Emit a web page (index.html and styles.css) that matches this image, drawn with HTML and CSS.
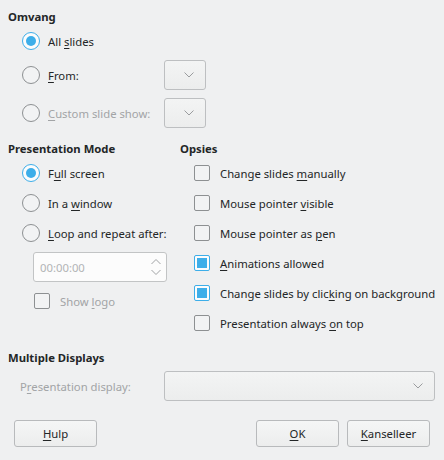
FILE: index.html
```html
<!DOCTYPE html>
<html>
<head>
<meta charset="utf-8">
<link rel="stylesheet" href="styles.css">
</head>
<body>
<div class="dlg">
  <section class="omvang">
    <div class="hdr">Omvang</div>
    <div class="row r-first"><span class="radio on"></span><span class="lbl">All <u>s</u>lides</span></div>
    <div class="row r-combo"><span class="radio"></span><span class="lbl wide"><u>F</u>rom:</span><span class="combo small"><svg class="chev" viewBox="0 0 10 6"><path d="M0.5 0.5 L5 5 L9.5 0.5"/></svg></span></div>
    <div class="row r-combo r-last"><span class="radio"></span><span class="lbl wide dis"><u>C</u>ustom slide show:</span><span class="combo small"><svg class="chev" viewBox="0 0 10 6"><path d="M0.5 0.5 L5 5 L9.5 0.5"/></svg></span></div>
  </section>
  <section class="mid">
    <div class="col left">
      <div class="hdr">Presentation Mode</div>
      <div class="row r30"><span class="radio on"></span><span class="lbl">F<u>u</u>ll screen</span></div>
      <div class="row r30"><span class="radio"></span><span class="lbl">In a <u>w</u>indow</span></div>
      <div class="row r30"><span class="radio"></span><span class="lbl"><u>L</u>oop and repeat after:</span></div>
      <div class="spin"><span class="spintext">00:00:00</span><svg class="updown" viewBox="0 0 10 16"><path d="M0.5 5 L5 0.5 L9.5 5 M0.5 11 L5 15.5 L9.5 11"/></svg></div>
      <div class="row r30 logo"><span class="check"></span><span class="lbl dis">Show <u>l</u>ogo</span></div>
    </div>
    <div class="col right">
      <div class="hdr">Opsies</div>
      <div class="row r30"><span class="check"></span><span class="lbl">Change slides <u>m</u>anually</span></div>
      <div class="row r30"><span class="check"></span><span class="lbl">Mouse pointer <u>v</u>isible</span></div>
      <div class="row r30"><span class="check"></span><span class="lbl">Mouse pointer as <u>p</u>en</span></div>
      <div class="row r30"><span class="check on"></span><span class="lbl"><u>A</u>nimations allowed</span></div>
      <div class="row r30"><span class="check on"></span><span class="lbl">Change slides by clic<u>k</u>ing on background</span></div>
      <div class="row r30"><span class="check"></span><span class="lbl">Presentation always <u>o</u>n top</span></div>
    </div>
  </section>
  <section class="multi">
    <div class="hdr">Multiple Displays</div>
    <div class="row disp"><span class="lbl dis plabel">P<u>r</u>esentation display:</span><span class="combo big"><svg class="chev" viewBox="0 0 10 6"><path d="M0.5 0.5 L5 5 L9.5 0.5"/></svg></span></div>
  </section>
  <div class="buttons">
    <button class="btn"><u>H</u>ulp</button>
    <span class="spacer"></span>
    <button class="btn"><u>O</u>K</button>
    <button class="btn"><u>K</u>anselleer</button>
  </div>
</div>
</body>
</html>
```

FILE: styles.css
```css
html, body {
  margin: 0;
  padding: 0;
  background: #eff0f1;
}
body {
  font-family: "Noto Sans", "DejaVu Sans", sans-serif;
  font-size: 11.3px;
  color: #232627;
  width: 444px;
  height: 460px;
  overflow: hidden;
}
u {
  text-decoration-thickness: 1px;
  text-underline-offset: 2px;
}
.dlg {
  padding: 8px 0 0 8px;
  display: flex;
  flex-direction: column;
}
.hdr {
  font-weight: bold;
  height: 17px;
  line-height: 17px;
}
.row {
  display: flex;
  align-items: center;
}
.omvang .hdr { margin-bottom: 6px; }
.r-first {
  height: 20px;
  padding-left: 14px;
}
.r-combo {
  height: 30px;
  padding-left: 14px;
  margin-top: 9px;
}
.r-last { margin-top: 8px; }
.lbl {
  white-space: nowrap;
}
.wide {
  width: 116px;
  flex: none;
}
.dis { color: #a2a4a6; }
.radio {
  width: 18px;
  height: 18px;
  box-sizing: border-box;
  border: 1px solid #8d9092;
  border-radius: 50%;
  background: #f2f3f4;
  margin-right: 8px;
  flex: none;
  position: relative;
}
.radio.on {
  border: 1.5px solid #3daee9;
  background: #fcfcfc;
}
.radio.on::after {
  content: "";
  position: absolute;
  left: 2.5px; top: 2.5px;
  width: 10px; height: 10px;
  border-radius: 50%;
  background: #3daee9;
}
.check {
  width: 16px;
  height: 16px;
  box-sizing: border-box;
  border: 1px solid #8d9092;
  border-radius: 2px;
  background: #f2f3f4;
  margin-right: 10px;
  flex: none;
  position: relative;
}
.check.on {
  border-color: #3daee9;
  background: #fcfcfc;
}
.check.on::after {
  content: "";
  position: absolute;
  left: 2px; top: 2px;
  width: 10px; height: 10px;
  background: #3daee9;
}
.combo {
  box-sizing: border-box;
  height: 30px;
  border: 1px solid #bdbfc1;
  border-radius: 3px;
  background: linear-gradient(#f3f4f4, #eceded);
  display: flex;
  align-items: center;
  justify-content: flex-end;
  padding-right: 11px;
  flex: none;
}
.combo.small { width: 42px; }
.chev {
  width: 10px;
  height: 6px;
  fill: none;
  stroke: #9a9c9e;
  stroke-width: 1;
}
.mid {
  display: flex;
  margin-top: 12px;
}
.col { display: flex; flex-direction: column; }
.left { width: 172px; flex: none; }
.mid .hdr { margin-bottom: 1px; }
.r30 {
  height: 30px;
  padding-left: 14px;
}
.right .r30 { padding-left: 14px; }
.spin {
  margin: 4px 0 0 25px;
  width: 134px;
  height: 30px;
  box-sizing: border-box;
  border: 1px solid #c2c4c5;
  border-radius: 3px;
  background: #fcfcfc;
  display: flex;
  align-items: center;
  justify-content: space-between;
  padding: 0 5px 0 6px;
}
.spintext { color: #b2b4b6; }
.updown {
  width: 10px;
  height: 16px;
  fill: none;
  stroke: #a0a2a4;
  stroke-width: 1;
}
.logo {
  padding-left: 26px;
  margin-top: 4px;
  height: 30px;
}
.multi {
  margin-top: 11px;
}
.multi .hdr { margin-bottom: 5px; }
.disp {
  height: 30px;
  padding-left: 12px;
}
.plabel { width: 144px; flex: none; }
.combo.big {
  width: 271px;
}
.buttons {
  display: flex;
  margin-top: 19px;
  padding-left: 6px;
  width: 416px;
}
.spacer { flex: 1; }
.btn {
  font-family: inherit;
  font-size: 11.3px;
  color: #232627;
  width: 83px;
  height: 27px;
  box-sizing: border-box;
  border: 1px solid #b8babc;
  border-radius: 3px;
  background: linear-gradient(#f5f6f6, #eceded);
  padding: 0;
  margin-left: 8px;
}
.btn:first-child { margin-left: 0; }
```
